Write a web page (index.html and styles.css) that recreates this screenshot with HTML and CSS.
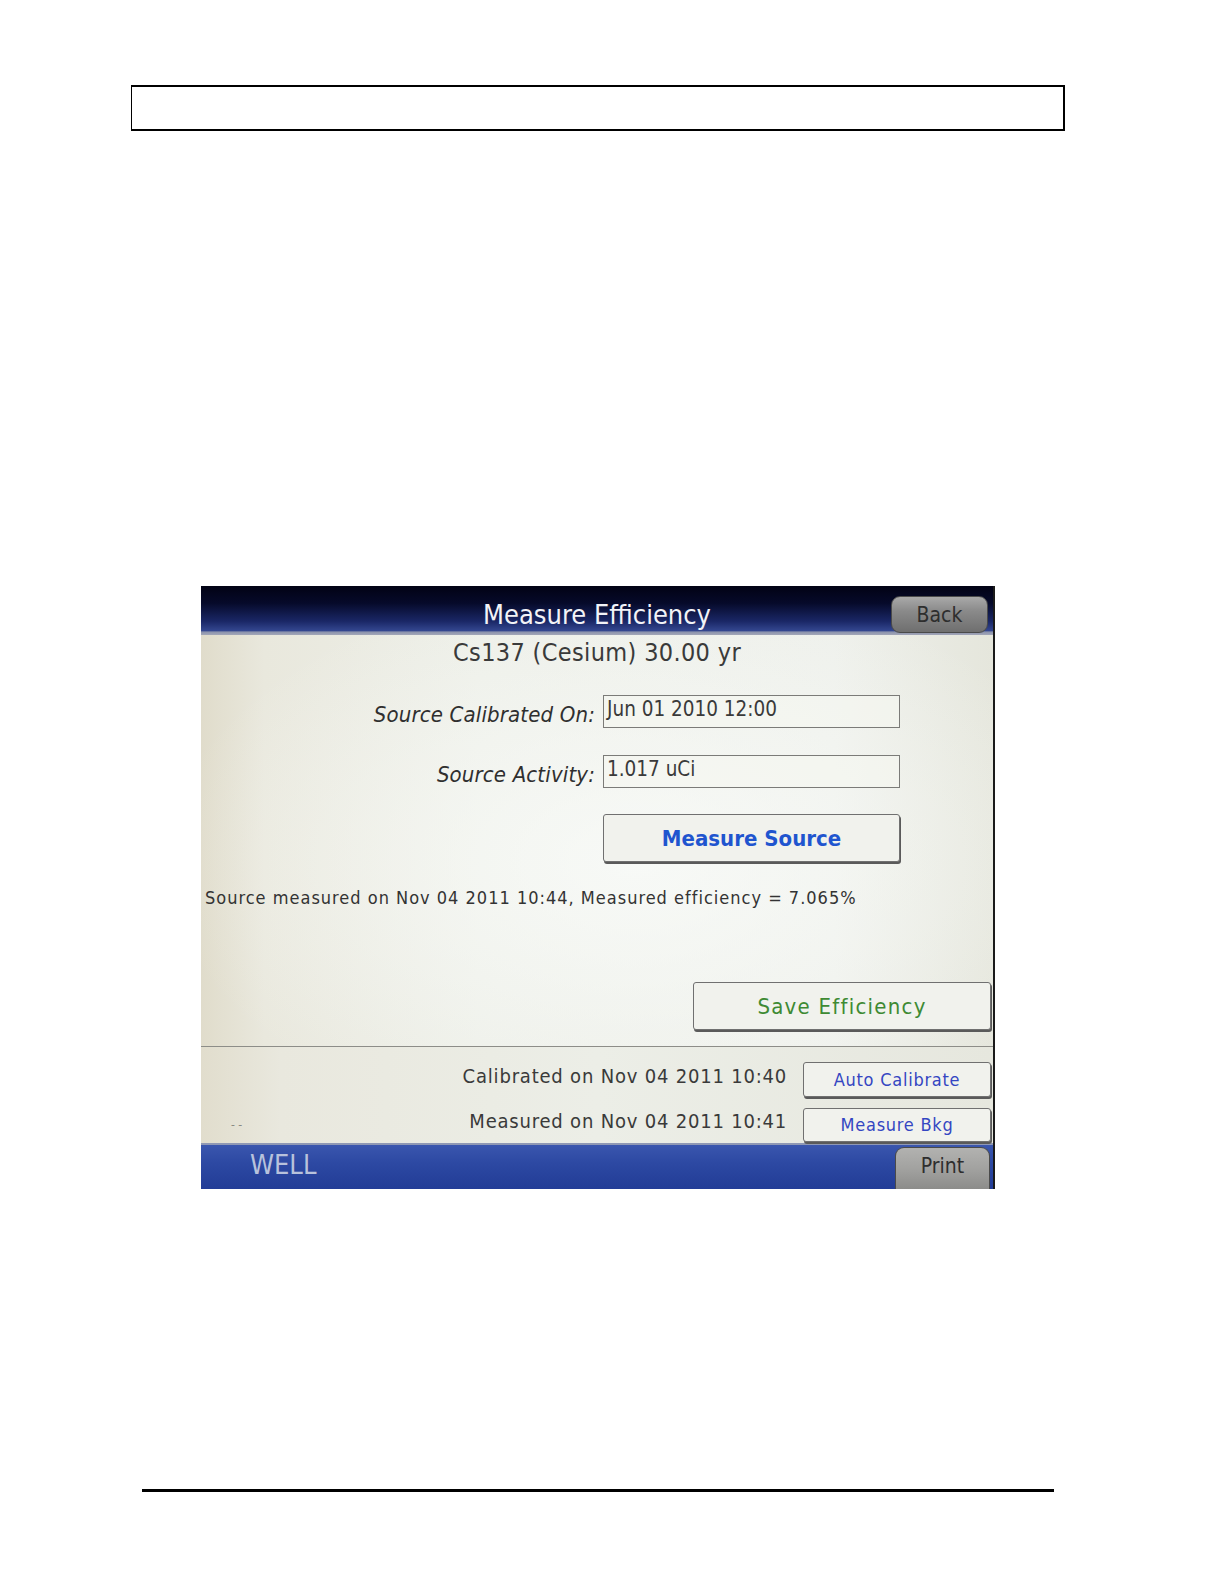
FILE: index.html
```html
<!DOCTYPE html>
<html>
<head>
<meta charset="utf-8">
<link rel="stylesheet" href="styles.css">
</head>
<body>
<div class="page">
  <div class="topbox"></div>
  <div class="screen">
    <div class="header">
      <div></div>
      <div class="title">Measure Efficiency</div>
      <div class="hbtn-wrap"><div class="hbtn back">Back</div></div>
    </div>
    <div class="content">
      <div class="isotope">Cs137 (Cesium) 30.00 yr</div>
      <div class="form">
        <div class="label">Source Calibrated On:</div>
        <div class="field">Jun 01 2010 12:00</div>
        <div class="label">Source Activity:</div>
        <div class="field">1.017 uCi</div>
        <div></div>
        <div class="btn big blue">Measure Source</div>
      </div>
      <div class="status">Source measured on Nov 04 2011 10:44, Measured efficiency = 7.065%</div>
      <div class="saverow"><div class="btn big green save">Save Efficiency</div></div>
    </div>
    <div class="lower">
      <div class="lrow">
        <div class="ltext">Calibrated on Nov 04 2011 10:40</div>
        <div class="btn small">Auto Calibrate</div>
      </div>
      <div class="lrow">
        <div class="dash">- -</div>
        <div class="ltext">Measured on Nov 04 2011 10:41</div>
        <div class="btn small">Measure Bkg</div>
      </div>
    </div>
    <div class="footer">
      <div class="well">WELL</div>
      <div class="hbtn print">Print</div>
    </div>
  </div>
  <div class="rule"></div>
</div>
</body>
</html>
```
FILE: styles.css
```css
html, body {
  margin: 0;
  padding: 0;
  background: #ffffff;
}
.page {
  width: 1224px;
  height: 1584px;
  padding-top: 85px;
  box-sizing: border-box;
  font-family: "DejaVu Sans Condensed", "DejaVu Sans", sans-serif;
}
.topbox {
  margin-left: 131px;
  width: 934px;
  height: 46px;
  box-sizing: border-box;
  border-top: 2px solid #000;
  border-bottom: 2px solid #000;
  border-left: 1px solid #000;
  border-right: 2px solid #000;
}
.screen {
  margin-top: 455px;
  margin-left: 201px;
  width: 794px;
  height: 603px;
  display: flex;
  flex-direction: column;
  background: #111;
  overflow: hidden;
  border-right: 2px solid #1a1a1a;
  box-sizing: border-box;
}
.header {
  height: 49px;
  flex: none;
  box-sizing: border-box;
  display: grid;
  grid-template-columns: 1fr auto 1fr;
  align-items: start;
  background: linear-gradient(to bottom, #020214 0%, #060a2a 35%, #1a2766 72%, #33468f 91%, #8c93ad 94%, #a3a7b8 100%);
}
.title {
  color: #f2f3f7;
  font-size: 27px;
  line-height: 30px;
  padding-top: 14px;
}
.hbtn-wrap {
  display: flex;
  justify-content: flex-end;
  padding: 10px 5px 0 0;
}
.hbtn {
  width: 97px;
  height: 37px;
  box-sizing: border-box;
  border-radius: 9px;
  background: linear-gradient(to bottom, #a9a9a9 0%, #8a8a8a 40%, #6f6f6f 100%);
  border: 1px solid #4a4a4a;
  color: #2e2e2e;
  font-size: 21px;
  display: flex;
  align-items: center;
  justify-content: center;
}
.content {
  height: 412px;
  flex: none;
  box-sizing: border-box;
  background:
    radial-gradient(ellipse 60% 70% at 55% 55%, rgba(250, 252, 250, 0.8), rgba(250, 252, 250, 0) 100%),
    linear-gradient(to right, #e0dccb 0%, #e9e8dd 8%, #edefe8 35%, #eef0eb 80%, #e5e6dc 100%);
  border-bottom: 1px solid #8d8d88;
  display: flex;
  flex-direction: column;
}
.isotope {
  text-align: center;
  color: #3a3a3a;
  font-size: 25px;
  line-height: 28px;
  padding-top: 4px;
  letter-spacing: 0.35px;
}
.form {
  margin-top: 28px;
  display: grid;
  grid-template-columns: 394px 297px;
  grid-template-rows: 33px 33px 48px;
  column-gap: 8px;
  row-gap: 26.5px;
}
.label {
  text-align: right;
  font-style: italic;
  color: #2f2f2f;
  font-size: 22px;
  line-height: 33px;
  padding-top: 3px;
  box-sizing: border-box;
  letter-spacing: 0.15px;
}
.field {
  border: 1px solid #7b7b78;
  background: rgba(245, 246, 240, 0.6);
  color: #3a3a3a;
  font-size: 20.5px;
  line-height: 26px;
  padding-left: 3px;
  box-sizing: border-box;
}
.btn {
  box-sizing: border-box;
  background: #f1f2ed;
  border: 1px solid #707070;
  border-radius: 3px;
  box-shadow: 1px 2px 0 #5a5a5a;
  display: flex;
  align-items: center;
  justify-content: center;
}
.big {
  height: 48px;
  font-size: 22px;
}
.blue {
  color: #1f55cf;
  font-weight: bold;
}
.green {
  color: #3e8a33;
  letter-spacing: 1.25px;
}
.status {
  margin-top: 25px;
  padding-left: 4px;
  color: #333;
  font-size: 18px;
  line-height: 22px;
  letter-spacing: 1px;
}
.saverow {
  margin-top: 73px;
  display: flex;
  justify-content: flex-end;
  padding-right: 2px;
}
.save {
  width: 298px;
  height: 48px;
}
.lower {
  height: 98px;
  flex: none;
  box-sizing: border-box;
  padding-top: 15px;
  background: linear-gradient(to right, #e1ddcd 0%, #e9e8de 10%, #eceee7 50%, #e6e7de 100%);
  border-bottom: 2px solid #8f98b5;
  display: flex;
  flex-direction: column;
  gap: 11px;
}
.lrow {
  display: flex;
  align-items: center;
  justify-content: flex-end;
  padding-right: 2px;
  height: 34.5px;
}
.ltext {
  color: #3a3a3a;
  font-size: 20px;
  letter-spacing: 0.8px;
  margin-right: 16px;
  padding-bottom: 7px;
}
.dash {
  color: #8a8a84;
  font-size: 12px;
  margin-right: auto;
  margin-left: 30px;
}
.small {
  width: 188px;
  height: 34.5px;
  color: #3446c2;
  font-size: 18px;
  letter-spacing: 0.75px;
}
.footer {
  flex: 1;
  display: flex;
  align-items: flex-end;
  justify-content: space-between;
  background: linear-gradient(to bottom, #3a56ae 0%, #2d49a3 40%, #223c96 100%);
}
.well {
  color: #b8c2dc;
  font-size: 27px;
  line-height: 36px;
  margin-left: 49px;
  padding-bottom: 6px;
}
.print {
  width: 95px;
  height: 42px;
  margin-right: 3px;
  padding-bottom: 5px;
  border-radius: 9px 9px 0 0;
  border-bottom: none;
  background: linear-gradient(to bottom, #b2b2b0 0%, #a2a2a0 50%, #8c8c8a 100%);
}
.rule {
  margin-top: 300px;
  margin-left: 142px;
  width: 912px;
  height: 3px;
  background: #000;
}
```
